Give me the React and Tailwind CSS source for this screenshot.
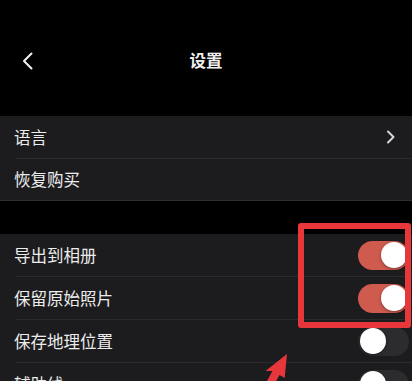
import React from "react";

const font = { fontFamily: '"Noto Sans CJK SC", "Noto Sans", sans-serif' };

function Toggle({ on }) {
  return (
    <div
      className={
        "w-[51px] h-[29px] rounded-full p-[2px] flex items-center " +
        (on ? "bg-[#cf5a4e] justify-end" : "bg-[#2c2c2f] justify-start")
      }
    >
      <div className="w-[26px] h-[26px] rounded-full bg-white shadow-[0_1px_3px_rgba(0,0,0,0.4)]" />
    </div>
  );
}

function Sep() {
  return <div className="h-px ml-[16px] bg-[#2b2b2e]" />;
}

function Row({ label, right, h = "h-[42px]" }) {
  return (
    <div className={"flex items-center justify-between pl-[14px] " + h}>
      <span className="text-[16.5px] text-[#ececec] leading-none">{label}</span>
      {right}
    </div>
  );
}

function Chevron() {
  return (
    <svg width="10" height="14" viewBox="0 0 10 14" className="mr-[16px]">
      <path d="M2 1.5 L7.5 7 L2 12.5" fill="none" stroke="#d8d8d8" strokeWidth="2" strokeLinecap="round" strokeLinejoin="round" />
    </svg>
  );
}

export default function App() {
  return (
    <div className="relative w-[412px] h-[381px] overflow-hidden bg-black" style={font}>
      {/* Header */}
      <div className="h-[116px] grid grid-cols-[1fr_auto_1fr] items-center pt-[5px]">
        <div className="pl-[22px] flex items-center">
          <svg width="12" height="18" viewBox="0 0 12 18">
            <path d="M9.5 1.5 L2 9 L9.5 16.5" fill="none" stroke="#f2f2f2" strokeWidth="2" strokeLinecap="round" strokeLinejoin="round" />
          </svg>
        </div>
        <div className="text-[16.5px] font-semibold text-[#f0f0f0] leading-none">设置</div>
        <div />
      </div>

      {/* Group 1 */}
      <div className="bg-[#1c1c1e] border-b border-[#2e2e30]">
        <Row label="语言" right={<Chevron />} />
        <Sep />
        <Row label="恢复购买" h="h-[41px]" />
      </div>

      <div className="h-[33px]" />

      {/* Group 2 */}
      <div className="bg-[#1c1c1e]">
        <Row label="导出到相册" right={<div className="mr-[3px]"><Toggle on /></div>} />
        <Sep />
        <Row label="保留原始照片" right={<div className="mr-[3px]"><Toggle on /></div>} />
        <Sep />
        <Row label="保存地理位置" right={<div className="mr-[3px]"><Toggle /></div>} />
        <Sep />
        <Row label="辅助线" right={<div className="mr-[3px]"><Toggle /></div>} />
      </div>

      {/* Red highlight box */}
      <div className="absolute left-[298px] top-[223px] w-[113px] h-[105px] border-[6px] border-[#e8373a] rounded-[3px]" />

      {/* Red arrow */}
      <svg className="absolute left-[250px] top-[345px]" width="50" height="36" viewBox="0 0 50 36">
        <polygon
          points="37,9 34.7,33 29.5,30 19.5,48 12.5,44 22.5,26 15.5,26"
          fill="#e8373a"
        />
      </svg>
    </div>
  );
}
